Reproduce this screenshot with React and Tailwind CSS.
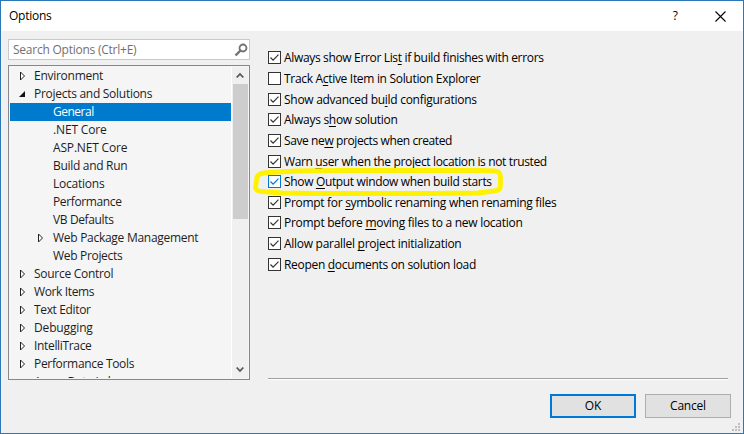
import React from "react";

const TREE = [
  { label: "Environment", kind: "closed", level: 0, track: "tracking-[-0.27px]" },
  { label: "Projects and Solutions", kind: "open", level: 0, track: "tracking-[-0.28px]" },
  { label: "General", level: 1, selected: true, track: "tracking-[-0.5px]" },
  { label: ".NET Core", level: 1, track: "tracking-[-0.15px]" },
  { label: "ASP.NET Core", level: 1, track: "tracking-[-0.17px]" },
  { label: "Build and Run", level: 1, track: "tracking-[-0.3px]" },
  { label: "Locations", level: 1, track: "tracking-[-0.23px]" },
  { label: "Performance", level: 1, track: "tracking-[-0.37px]" },
  { label: "VB Defaults", level: 1, track: "tracking-[-0.37px]" },
  { label: "Web Package Management", kind: "closed", level: 1, track: "tracking-[-0.28px]" },
  { label: "Web Projects", level: 1, track: "tracking-[-0.32px]" },
  { label: "Source Control", kind: "closed", level: 0, track: "tracking-[-0.28px]" },
  { label: "Work Items", kind: "closed", level: 0, track: "tracking-[-0.37px]" },
  { label: "Text Editor", kind: "closed", level: 0, track: "tracking-[-0.35px]" },
  { label: "Debugging", kind: "closed", level: 0, track: "tracking-[-0.15px]" },
  { label: "IntelliTrace", kind: "closed", level: 0, track: "tracking-[-0.33px]" },
  { label: "Performance Tools", kind: "closed", level: 0, track: "tracking-[-0.32px]" },
  { label: "Azure Data Lake", level: 0, track: "tracking-[-0.3px]" },
];

// Each label is split around its access key; `h` is the row height.
const OPTIONS = [
  { text: ["Always show Error Lis", "t", " if build finishes with errors"], on: true, h: "h-[21px]", track: "tracking-[-0.34px]" },
  { text: ["Track A", "c", "tive Item in Solution Explorer"], on: false, h: "h-[21px]", track: "tracking-[-0.31px]" },
  { text: ["Show advanced bu", "i", "ld configurations"], on: true, h: "h-[20px]", track: "tracking-[-0.28px]" },
  { text: ["Always s", "h", "ow solution"], on: true, h: "h-[21px]", track: "tracking-[-0.29px]" },
  { text: ["Save ne", "w", " projects when created"], on: true, h: "h-[21px]", track: "tracking-[-0.4px]" },
  { text: ["Warn ", "u", "ser when the project location is not trusted"], on: true, h: "h-[20px]", track: "tracking-[-0.36px]" },
  { text: ["Show ", "O", "utput window when build starts"], on: true, h: "h-[21px]", hot: true, track: "tracking-[-0.34px]" },
  { text: ["Prompt for ", "s", "ymbolic renaming when renaming files"], on: true, h: "h-[20px]", track: "tracking-[-0.3px]" },
  { text: ["Prompt before ", "m", "oving files to a new location"], on: true, h: "h-[21px]", track: "tracking-[-0.28px]" },
  { text: ["Allow parallel ", "p", "roject initialization"], on: true, h: "h-[21px]", track: "tracking-[-0.28px]" },
  { text: ["Reopen ", "d", "ocuments on solution load"], on: true, h: "h-[21px]", track: "tracking-[-0.31px]" },
];

function Arrow({ kind }) {
  return (
    <svg width="10" height="10" viewBox="0 0 10 10" className="shrink-0">
      {kind === "closed" && <path d="M2.5 1v8L6.5 5z" fill="#fff" stroke="#222" strokeWidth="1" />}
      {kind === "open" && <path d="M7 2v6H1z" fill="#111" />}
    </svg>
  );
}

function TreeRow({ item }) {
  return (
    <div
      className={
        "flex h-[18px] shrink-0 items-center " +
        (item.level ? "pl-[26px] " : "pl-[8px] ") +
        (item.selected ? "bg-[#007acc] text-white" : "text-[#1e1e1e]")
      }
    >
      <Arrow kind={item.kind} />
      <span className={(item.level ? "pl-[7px] " : "pl-[6px] ") + item.track}>{item.label}</span>
    </div>
  );
}

function CheckBox({ on, hot }) {
  const color = hot ? "#0078d7" : "#333";
  return (
    <svg width="13" height="13" viewBox="0 0 13 13" className="shrink-0">
      <rect x="0.5" y="0.5" width="12" height="12" fill="#fff" stroke={color} />
      {on && <path d="M2.5 6.5l2.6 2.7 5.4-5.6" fill="none" stroke={color} strokeWidth="1.2" />}
    </svg>
  );
}

function Option({ item }) {
  return (
    <div className={"relative flex items-start " + item.h}>
      <CheckBox on={item.on} hot={item.hot} />
      <span className={"pl-[3px] leading-[14px] " + item.track}>
        {item.text[0]}
        <span className="underline decoration-1 underline-offset-[2px] [text-decoration-skip-ink:none]">{item.text[1]}</span>
        {item.text[2]}
      </span>
      {item.hot && (
        <svg width="254" height="32" viewBox="0 0 254 32" className="absolute -top-[8px] -left-[16px]">
          <path
            d="M17 5.500L45 4L90 3.500H226L243 4Q248.500 4.500 248.500 10V18Q248.500 24 242 24L226 26L180 26.500H60L30 26L10 24.500Q3.500 24.500 3.500 20L5 10Q6 6 17 5.500Z"
            fill="none"
            stroke="#fff200"
            strokeWidth="4.800"
          />
        </svg>
      )}
    </div>
  );
}

export default function App() {
  return (
    <div className="flex h-[434px] w-[744px] flex-col overflow-hidden border border-[#2b78b8] bg-[#f0f0f0] font-['Open_Sans','Noto_Sans',sans-serif] text-[12px] whitespace-nowrap text-black">
      <header className="flex h-[30px] shrink-0 items-center bg-white pr-[17px] pl-[8px]">
        <span className="flex-1 tracking-[-0.25px]">Options</span>
        <span className="mr-[37px] text-[12px] font-medium">?</span>
        <svg width="11" height="11" viewBox="0 0 11 11">
          <path d="M.5.5l10 10M10.500.5l-10 10" stroke="#000" strokeWidth="1.1" />
        </svg>
      </header>
      <main className="flex h-[349px] shrink-0 pl-[7px]">
        <section className="flex w-[242px] flex-col pt-[8px]">
          <div className="flex h-[21px] shrink-0 items-center justify-between border border-[#c5c9d5] bg-white pr-[1px] pl-[4px] text-[#717171]">
            <span className="tracking-[-0.24px]">Search Options (Ctrl+E)</span>
            <svg width="14" height="14" viewBox="0 0 14 14">
              <circle cx="9" cy="5" r="3.500" fill="none" stroke="#717171" strokeWidth="1.800" />
              <path d="M6.500 7.500L1.500 12.500" stroke="#717171" strokeWidth="2.400" />
            </svg>
          </div>
          <div className="mt-[5px] flex h-[315px] border border-[#828790] bg-[#f5f5f5] px-px pt-px pb-px">
            <div className="flex w-[221px] flex-col overflow-hidden">
              {TREE.map((item) => (
                <TreeRow key={item.label} item={item} />
              ))}
            </div>
            <div className="flex w-[17px] flex-col items-center border-l border-white bg-[#f0f0f0]">
              <div className="flex h-[17px] items-center">
                <svg width="8" height="7" viewBox="0 0 8 7">
                  <path d="M.7 5.500L4 2l3.300 3.500" fill="none" stroke="#555" strokeWidth="1.800" />
                </svg>
              </div>
              <div className="h-[135px] w-[15px] bg-[#cdcdcd]" />
              <div className="mt-auto flex h-[17px] items-center">
                <svg width="8" height="7" viewBox="0 0 8 7">
                  <path d="M.7 1.500L4 5l3.300-3.500" fill="none" stroke="#555" strokeWidth="1.800" />
                </svg>
              </div>
            </div>
          </div>
        </section>
        <section className="ml-[18px] flex w-[460px] flex-col pt-[20px]">
          {OPTIONS.map((item) => (
            <Option key={item.text[0]} item={item} />
          ))}
          <div className="mt-auto h-[2px] border-t border-b border-t-[#a0a0a0] border-b-white" />
        </section>
      </main>
      <footer className="flex flex-1 items-start pt-[14px] pl-[549px]">
        <button className="h-[24px] w-[86px] border-2 border-[#0078d7] bg-[#e1e1e1] tracking-[-0.2px]">OK</button>
        <button className="ml-[9px] h-[24px] w-[86px] border border-[#adadad] bg-[#e1e1e1] tracking-[-0.2px]">Cancel</button>
        <svg width="8" height="8" viewBox="0 0 8 8" className="mt-[29px] ml-[1px]" fill="#bfbfbf">
          <path d="M6 0h2v2H6zM3 3h2v2H3zM6 3h2v2H6zM0 6h2v2H0zM3 6h2v2H3zM6 6h2v2H6z" />
        </svg>
      </footer>
    </div>
  );
}
